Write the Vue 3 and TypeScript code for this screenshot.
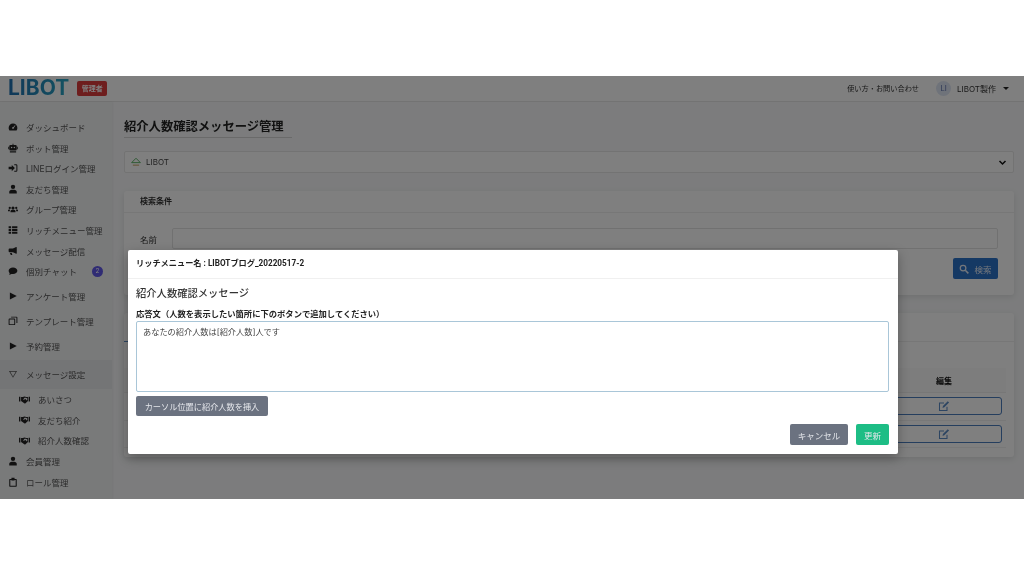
<template>
  <div class="screen">
    <div class="page">
      <header class="topbar">
        <div class="brand">
          <span class="logo">LIBOT</span>
          <span class="role">管理者</span>
        </div>
        <div class="top-right">
          <span class="help">使い方・お問い合わせ</span>
          <span class="avatar">LI</span>
          <span class="user">LIBOT製作</span>
          <span class="caret"></span>
        </div>
      </header>

      <div class="body">
        <aside class="sidebar">
          <div
            v-for="item in menu"
            :key="item.label"
            class="menu-item"
            :class="item.kind"
          >
            <svg class="menu-icon" viewBox="0 0 16 16"><path :d="icons[item.icon]" /></svg>
            <span>{{ item.label }}</span>
            <span v-if="item.badge" class="count">{{ item.badge }}</span>
          </div>
        </aside>

        <main class="content">
          <h1 class="title">紹介人数確認メッセージ管理</h1>

          <div class="bot-select">
            <svg class="bot-icon" viewBox="0 0 16 16">
              <path d="M8 2 L15 9 H1 Z" fill="none" stroke="#55b060" stroke-width="1.5" />
              <path d="M3 13 H13" stroke="#c09a55" stroke-width="1.5" />
            </svg>
            <span>LIBOT</span>
            <svg class="chevron" viewBox="0 0 12 12">
              <path d="M2 4 L6 8 L10 4" fill="none" stroke="#111" stroke-width="2" />
            </svg>
          </div>

          <section class="card search-card">
            <div class="card-head">検索条件</div>
            <div class="search-row">
              <label>名前</label>
              <div class="fake-input"></div>
            </div>
            <div class="search-actions">
              <button class="btn-search" type="button">
                <svg viewBox="0 0 16 16">
                  <circle cx="6.5" cy="6.5" r="4.5" fill="none" stroke="#e8eef8" stroke-width="2" />
                  <path d="M10 10 L15 15" stroke="#e8eef8" stroke-width="2.4" />
                </svg>
                検索
              </button>
            </div>
          </section>

          <section class="card list-card">
            <div class="tabs"><span class="tab-line"></span></div>
            <div class="table-head"><span>編集</span></div>
            <div v-for="n in 2" :key="n" class="table-row">
              <button class="btn-edit" type="button">
                <svg viewBox="0 0 16 16">
                  <path d="M12 9 V14 H2 V4 H8" fill="none" stroke="#5b8ac4" stroke-width="1.4" />
                  <path d="M6 10.5 L6.6 8 L13 1.6 L14.8 3.4 L8.4 9.8 Z" fill="#5b8ac4" />
                </svg>
              </button>
            </div>
          </section>
        </main>
      </div>
    </div>

    <div class="overlay">
      <div class="modal">
        <div class="modal-head">リッチメニュー名 : LIBOTブログ_20220517-2</div>
        <div class="modal-body">
          <h2 class="modal-title">紹介人数確認メッセージ</h2>
          <label class="field-label">応答文（人数を表示したい箇所に下のボタンで追加してください）</label>
          <div class="textarea">あなたの紹介人数は[紹介人数]人です</div>
          <button class="btn-insert" type="button">カーソル位置に紹介人数を挿入</button>
          <div class="modal-foot">
            <button class="btn-cancel" type="button">キャンセル</button>
            <button class="btn-update" type="button">更新</button>
          </div>
        </div>
      </div>
    </div>
  </div>
</template>

<script setup lang="ts">
interface MenuItem {
  label: string;
  icon: string;
  kind: string;
  badge?: number;
}

const icons: Record<string, string> = {
  gauge: 'M8 2.5a7 7 0 0 0-7 7c0 1.5.5 2.900 1.300 4h11.400c.8-1.100 1.300-2.500 1.300-4a7 7 0 0 0-7-7zM8 11a1.500 1.500 0 1 1 .6-2.900L11 5l1 .7L9.500 9.300A1.500 1.500 0 0 1 8 11z',
  robot: 'M7.300 1h1.400v2H12a2 2 0 0 1 2 2v5a2 2 0 0 1-2 2H4a2 2 0 0 1-2-2V5a2 2 0 0 1 2-2h3.300zM5.800 6a1.200 1.200 0 1 0 0 2.400 1.200 1.200 0 0 0 0-2.400zm4.400 0a1.200 1.200 0 1 0 0 2.400 1.200 1.200 0 0 0 0-2.400zM0 6h1.200v4H0zm14.800 0H16v4h-1.200zM3 13h10v2H3z',
  signin: 'M6 3l5 5-5 5v-3H1V6h5zM10 2h3a2 2 0 0 1 2 2v8a2 2 0 0 1-2 2h-3v-1.600h3a.4.4 0 0 0 .4-.4V4a.4.4 0 0 0-.4-.4h-3z',
  user: 'M8 1a3.500 3.500 0 1 1 0 7 3.500 3.500 0 0 1 0-7zM2 15v-2.500C2 10.500 3.800 9 6 9h4c2.200 0 4 1.500 4 3.500V15z',
  users: 'M8 4a2.500 2.500 0 1 1 0 5 2.500 2.500 0 0 1 0-5zM4 13v-1.500C4 10.100 5 9.500 6.500 9.500h3c1.500 0 2.500.6 2.500 2V13zM2.800 4.500a1.800 1.800 0 1 1 0 3.600 1.800 1.800 0 0 1 0-3.600zm10.400 0a1.800 1.800 0 1 1 0 3.600 1.800 1.800 0 0 1 0-3.600zM0 11.500V10c0-.9.700-1.400 1.600-1.400h1.600C3 9.200 3 10.500 3 11.500zm13 0c0-1 0-2.300-.2-2.900h1.600c.9 0 1.600.5 1.600 1.400v1.500z',
  list: 'M1 2h4v3.200H1zm5.500 0H15v3.200H6.500zM1 6.400h4v3.200H1zm5.500 0H15v3.200H6.500zM1 10.800h4V14H1zm5.500 0H15V14H6.500z',
  horn: 'M14 2v10l-1 .4C11 11 8.500 10 6 10H2.500A1.500 1.500 0 0 1 1 8.500v-3A1.500 1.500 0 0 1 2.500 4H6c2.500 0 5-1 7-2.400zM3 11h3l1 3.500H4.500z',
  comment: 'M8 2.500c3.900 0 7 2.300 7 5.200s-3.100 5.200-7 5.200c-.9 0-1.700-.1-2.500-.3C4.500 13.300 3 14 1.500 14c.7-.8 1.100-1.700 1.200-2.500C1.600 10.500 1 9.200 1 7.700c0-2.900 3.100-5.200 7-5.200z',
  play: 'M3 2.500 L14 8 L3 13.500 Z',
  clone: 'M5 1h8.500A1.500 1.500 0 0 1 15 2.500V11h-1.500V2.500H5zM2.500 4H10a1.500 1.500 0 0 1 1.500 1.500V13A1.500 1.500 0 0 1 10 14.500H2.500A1.500 1.500 0 0 1 1 13V5.500A1.500 1.500 0 0 1 2.500 4zm0 1.500V13H10V5.500z',
  open: 'M1.500 3h13L8 14zM3.600 4.200 8 11.800l4.400-7.600z',
  hands: 'M0 4h2v7H0zm14 0h2v7h-2zM3 4.500h2.500L8 3.500l2.500 1H13V10l-3.500 3.500c-.6.500-1.300.5-1.800 0L3 10zM8 5.500 6 8c.6.6 1.500.6 2 0l1-1 2.500 2.300.5-.6V6L10 5.500z',
  clip: 'M5.500 1h5v2H13a1 1 0 0 1 1 1v10.500a1 1 0 0 1-1 1H3a1 1 0 0 1-1-1V4a1 1 0 0 1 1-1h2.500zM3.700 4.700v9.100h8.600V4.700h-1.800v.8h-5v-.8z'
};

const menu: MenuItem[] = [
  { label: 'ダッシュボード', icon: 'gauge', kind: 'plain' },
  { label: 'ボット管理', icon: 'robot', kind: 'plain' },
  { label: 'LINEログイン管理', icon: 'signin', kind: 'plain' },
  { label: '友だち管理', icon: 'user', kind: 'plain' },
  { label: 'グループ管理', icon: 'users', kind: 'plain' },
  { label: 'リッチメニュー管理', icon: 'list', kind: 'plain' },
  { label: 'メッセージ配信', icon: 'horn', kind: 'plain' },
  { label: '個別チャット', icon: 'comment', kind: 'plain', badge: 2 },
  { label: 'アンケート管理', icon: 'play', kind: 'tall first-tall' },
  { label: 'テンプレート管理', icon: 'clone', kind: 'tall' },
  { label: '予約管理', icon: 'play', kind: 'tall' },
  { label: 'メッセージ設定', icon: 'open', kind: 'opened' },
  { label: 'あいさつ', icon: 'hands', kind: 'plain sub' },
  { label: '友だち紹介', icon: 'hands', kind: 'plain sub' },
  { label: '紹介人数確認', icon: 'hands', kind: 'plain sub' },
  { label: '会員管理', icon: 'user', kind: 'plain' },
  { label: 'ロール管理', icon: 'clip', kind: 'plain' }
];
</script>

<style>
html,
body {
  margin: 0;
  background: #fff;
}
</style>

<style scoped>
.screen {
  position: relative;
  height: 423px;
  margin: 76px 0 77px;
  overflow: hidden;
  font-family: Inter, "Noto Sans CJK JP", sans-serif;
  color: #333;
}

.page {
  height: 100%;
  background: #f8f9fa;
  filter: blur(0.45px);
}

.topbar {
  display: flex;
  align-items: center;
  justify-content: space-between;
  box-sizing: border-box;
  height: 26px;
  padding: 0 15px 1px 8px;
  background: #fff;
  border-bottom: 1px solid #e6e6e6;
}

.brand {
  display: flex;
  align-items: center;
  gap: 8px;
}

.logo {
  font-size: 21px;
  line-height: 24px;
  font-weight: 700;
  background: linear-gradient(90deg, #1f6fb0, #2aa6c4);
  -webkit-background-clip: text;
  background-clip: text;
  color: transparent;
}

.role {
  width: 30px;
  height: 15px;
  line-height: 15px;
  text-align: center;
  border-radius: 2px;
  background: #dc3c3c;
  color: #fff;
  font-size: 7px;
  font-weight: 700;
}

.top-right {
  display: flex;
  align-items: center;
  font-size: 7.2px;
}

.help {
  margin-right: 17px;
}

.avatar {
  width: 15px;
  height: 15px;
  line-height: 15px;
  margin-right: 6px;
  border-radius: 50%;
  text-align: center;
  background: #dfe6f5;
  color: #5a6fa8;
  font-size: 7.5px;
}

.user {
  margin-right: 7px;
  font-size: 8px;
}

.caret {
  width: 0;
  height: 0;
  border-left: 3px solid transparent;
  border-right: 3px solid transparent;
  border-top: 3px solid #222;
}

.body {
  display: flex;
  height: 397px;
}

.sidebar {
  flex: none;
  box-sizing: border-box;
  width: 112px;
  padding-top: 14.7px;
  background: #f3f4f5;
  box-shadow: 1px 0 2px rgba(0, 0, 0, 0.05);
  font-size: 8.500px;
  color: #555;
}

.menu-item {
  display: flex;
  align-items: center;
  padding-left: 8px;
}

.plain {
  height: 20.6px;
}

.tall {
  height: 25px;
}

.first-tall {
  margin-top: 2px;
}

.opened {
  height: 29px;
  margin-top: 1.5px;
  background: #e9eaec;
}

.sub {
  padding-left: 19px;
}

.menu-icon {
  flex: none;
  width: 10px;
  height: 10px;
  margin-right: 8px;
  fill: #222;
}

.sub .menu-icon {
  width: 11px;
  height: 11px;
}

.opened .menu-icon {
  fill: #555;
}

.count {
  width: 11px;
  height: 11px;
  line-height: 11px;
  margin-left: 15px;
  border-radius: 50%;
  background: #6058e8;
  color: #fff;
  font-size: 6.500px;
  text-align: center;
}

.content {
  flex: 1;
  min-width: 0;
  padding: 15px 10px 0 12px;
}

.title {
  width: 168px;
  margin: 0 0 13px;
  border-bottom: 1px solid #d5d5d5;
  font-size: 12.300px;
  line-height: 20px;
  font-weight: 700;
  color: #222;
  white-space: nowrap;
}

.bot-select {
  display: flex;
  align-items: center;
  box-sizing: border-box;
  height: 22px;
  padding: 0 6px;
  background: #fff;
  border: 1px solid #e6e6e6;
  border-radius: 2px;
  font-size: 8px;
  color: #444;
}

.bot-icon {
  width: 10px;
  height: 10px;
  margin-right: 5px;
}

.chevron {
  width: 9px;
  height: 9px;
  margin-left: auto;
}

.card {
  background: #fff;
  border-radius: 3px;
  box-shadow: 0 2px 6px rgba(0, 0, 0, 0.1);
}

.search-card {
  height: 104px;
  margin-top: 18px;
}

.card-head {
  box-sizing: border-box;
  height: 22px;
  line-height: 20px;
  padding-left: 16px;
  border-bottom: 1px solid #eee;
  font-size: 8px;
  font-weight: 700;
}

.search-row {
  display: flex;
  align-items: center;
  margin-top: 15px;
  padding: 0 16px;
  font-size: 8.500px;
}

.search-row label {
  width: 32px;
}

.fake-input {
  flex: 1;
  height: 21px;
  box-sizing: border-box;
  border: 1px solid #e3e3e3;
  border-radius: 2px;
}

.search-actions {
  display: flex;
  justify-content: flex-end;
  margin-top: 9px;
  padding-right: 16px;
}

.btn-search {
  display: flex;
  align-items: center;
  justify-content: center;
  gap: 5px;
  width: 45px;
  height: 21px;
  padding: 0;
  border: none;
  border-radius: 2px;
  background: #2b72c8;
  color: #e8eef8;
  font: inherit;
  font-size: 8.500px;
}

.btn-search svg {
  width: 10px;
  height: 10px;
}

.list-card {
  height: 144px;
  margin-top: 18px;
  padding-right: 8px;
}

.tabs {
  position: relative;
  box-sizing: border-box;
  height: 29px;
  margin-right: -8px;
  border-bottom: 1px solid #eee;
}

.tab-line {
  position: absolute;
  left: 0;
  bottom: -1px;
  width: 30px;
  height: 1px;
  background: #5b8ac4;
}

.table-head {
  display: flex;
  justify-content: flex-end;
  align-items: center;
  box-sizing: border-box;
  height: 25px;
  margin-top: 26px;
  padding-right: 54px;
  background: #fafafa;
  border-bottom: 1px solid #eee;
  font-size: 8px;
  font-weight: 700;
  color: #111;
}

.table-row {
  display: flex;
  justify-content: flex-end;
  align-items: center;
  height: 26.5px;
  padding-right: 4px;
  border-bottom: 1px solid #f0f0f0;
}

.btn-edit {
  display: flex;
  align-items: center;
  justify-content: center;
  width: 116px;
  height: 18px;
  padding: 0;
  border: 1px solid #4a7cbc;
  border-radius: 3px;
  background: #fff;
}

.btn-edit svg {
  width: 12px;
  height: 12px;
}

.overlay {
  position: absolute;
  inset: 0;
  display: flex;
  justify-content: center;
  align-items: flex-start;
  box-sizing: border-box;
  padding: 174px 0 0 2px;
  background: rgba(0, 0, 0, 0.5);
}

.modal {
  width: 770px;
  height: 204px;
  background: #fff;
  border-radius: 2px;
  box-shadow: 0 4px 12px rgba(0, 0, 0, 0.3);
  filter: blur(0.35px);
}

.modal-head {
  box-sizing: border-box;
  height: 29px;
  line-height: 27px;
  padding-left: 8px;
  border-bottom: 1px solid #f0f0f0;
  font-family: Roboto, "Noto Sans CJK JP", sans-serif;
  font-size: 8.200px;
  font-weight: 700;
  color: #222;
}

.modal-body {
  display: flex;
  flex-direction: column;
  align-items: flex-start;
  padding: 6px 9px 0 8px;
}

.modal-title {
  margin: 0 0 7px;
  font-size: 10.300px;
  line-height: 16px;
  font-weight: 500;
  color: #333;
}

.field-label {
  margin-bottom: 1px;
  font-size: 8.300px;
  line-height: 12px;
  font-weight: 700;
  color: #222;
}

.textarea {
  box-sizing: border-box;
  width: 100%;
  height: 71px;
  padding: 4px 6px;
  border: 1px solid #a9c6d8;
  border-radius: 2px;
  font-size: 8.200px;
  line-height: 12px;
  color: #444;
}

.btn-insert {
  width: 132px;
  height: 20px;
  margin-top: 4px;
  padding: 0;
  border: none;
  border-radius: 2px;
  background: #6b7280;
  color: #e5e7eb;
  font: inherit;
  font-size: 8.200px;
}

.modal-foot {
  align-self: flex-end;
  display: flex;
  gap: 8px;
  margin-top: 8px;
}

.btn-cancel,
.btn-update {
  height: 21px;
  padding: 0;
  border: none;
  border-radius: 2px;
  color: #e5e7eb;
  font: inherit;
  font-size: 8.500px;
}

.btn-cancel {
  width: 58px;
  background: #6b7280;
}

.btn-update {
  width: 33px;
  background: #1dbd85;
}
</style>
